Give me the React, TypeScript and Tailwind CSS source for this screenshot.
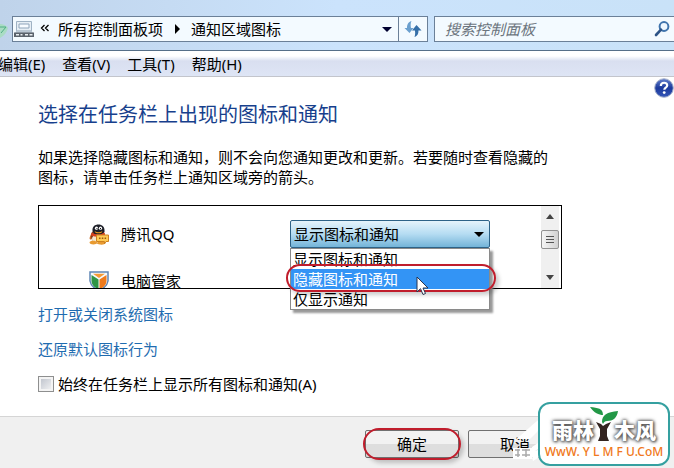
import * as React from "react";
import { useState } from "react";

const menuItems = ["编辑(E)", "查看(V)", "工具(T)", "帮助(H)"];

const behaviors = ["显示图标和通知", "隐藏图标和通知", "仅显示通知"];

const links = ["打开或关闭系统图标", "还原默认图标行为"];

function DeviceIcon() {
  return (
    <svg width="20" height="18" viewBox="0 0 20 18" aria-hidden="true">
      <path d="M2.500 1.500h15v10h-15z" fill="#e6eef5" stroke="#9fb2c4" />
      <path d="M5 4h10v4H5z" fill="#f7fbff" stroke="#8fa5bb" />
      <path d="M3 10h14l2 3H1z" fill="#b8c6d3" />
      <path d="M0 12.500h20V17H0z" fill="#5a626c" />
      <path d="M2 14h3v1.500H2zM6.500 14h2v1.500h-2zM11 14h3v1.500h-3zM15.500 14h3v1.500h-3z" fill="#e8eef2" />
    </svg>
  );
}

function RefreshIcon() {
  return (
    <svg width="18" height="18" viewBox="0 0 18 18" aria-hidden="true">
      <path d="M7.500 1C3.600 2 3 5.500 3 8H.5l5 5 4-5H7C6.500 5.500 6.500 3 7.500 1z" fill="#6a9fce" />
      <path d="M10.500 17c3.600-1.200 4-4 3.900-6.500H17.500l-5-5.500-4.500 5.500h2.900c.5 2 .3 4.500-.4 6.500z" fill="#356fa8" />
    </svg>
  );
}

function SearchIcon() {
  return (
    <svg width="16" height="16" viewBox="0 0 16 16" fill="none" aria-hidden="true">
      <circle cx="10" cy="5.500" r="4.400" fill="#eef7ff" stroke="#3f74ad" strokeWidth="2" />
      <path d="M7 8.700 2 14" stroke="#2c5387" strokeWidth="2.600" strokeLinecap="round" />
    </svg>
  );
}

function HelpIcon() {
  return (
    <svg width="20" height="20" viewBox="0 0 20 20" aria-hidden="true">
      <defs>
        <linearGradient id="help" x1="0" y1="0" x2="0" y2="1">
          <stop offset="0" stopColor="#6480cc" />
          <stop offset="0.5" stopColor="#1c3a9c" />
          <stop offset="1" stopColor="#3557b8" />
        </linearGradient>
      </defs>
      <circle cx="10" cy="10" r="9.300" fill="url(#help)" stroke="#a9b3cc" />
      <path d="M6.800 8c0-4.300 6.600-4.200 6.400-.5-.1 2.200-2.900 2.200-2.900 4.300" fill="none" stroke="#fff" strokeWidth="2.200" />
      <circle cx="10.200" cy="14.600" r="1.400" fill="#fff" />
    </svg>
  );
}

function QQIcon() {
  return (
    <svg width="20" height="21" viewBox="0 0 20 21" aria-hidden="true">
      <path d="M3 9c-3 4-3 7-1 6.500l2-3z" fill="#c9641c" />
      <ellipse cx="9" cy="12" rx="7" ry="7.500" fill="#7a3a1e" />
      <ellipse cx="8" cy="15" rx="5" ry="4.500" fill="#f6e6cc" />
      <path d="M3.500 7C3 2.500 6 .5 9.500.5S16 3 15.500 7.500l-2.500 3H6z" fill="#1d1f28" />
      <ellipse cx="7.500" cy="4.300" rx="1.600" ry="1.800" fill="#fff" />
      <ellipse cx="11.500" cy="4.300" rx="1.600" ry="1.800" fill="#fff" />
      <path d="M7.500 4h1v1.300h-1zM11 4h1v1.300h-1z" fill="#111" />
      <path d="M5.500 7q4 2.500 8 0l-1 1.800q-3 1-6 0z" fill="#f29b1d" />
      <path d="M2.500 8.500q6 4 13 0l.5 3Q9 14 2 11.500z" fill="#d9401c" />
      <path d="M.5 18.500c0-2.500 7-2.500 7.500 0s-7.500 2.500-7.500 0zM8 19c1-2.500 7-2.500 8 0s-8 2-8 0z" fill="#e89a30" />
      <path d="M7.500 11h12v6.500H17L15.500 20v-2.500h-8z" fill="#ffcb55" stroke="#cf8220" />
      <path d="M10 14.300h1.500M12.800 14.300h1.500M15.600 14.300h1.500" stroke="#9a5b10" strokeWidth="1.500" />
    </svg>
  );
}

function ShieldIcon() {
  return (
    <svg width="20" height="20" viewBox="0 0 20 20" aria-hidden="true">
      <path d="M1 1h18v9q-1 6-9 9.500Q2 16 1 10z" fill="#f4f9fd" stroke="#5f86b5" strokeWidth="1.500" />
      <path d="M2.500 4L9.500 8.500v10Q2.500 15 2.500 10z" fill="#2f9545" />
      <path d="M17.500 4L10.500 8.500v10q7-3.500 7-8.500z" fill="#ee7a1c" />
      <path d="M4 2.800h12L10 7z" fill="#f59a34" />
    </svg>
  );
}

function CancelSmudge() {
  return (
    <svg width="66" height="48" viewBox="0 0 66 48" className="pointer-events-none absolute -top-4 left-10" aria-hidden="true">
      <path d="M7 26C17 18 26 9 34 3l4 4-9 11q-4 4-7 7H7z" fill="#fff" />
      <path d="M5 34h19v11H5z" fill="#fff" />
      <path d="M24 33l9-6v6l-6 4 6-2v7l-8 5-1-4z" fill="#fff" />
      <path d="M7 36h5M14 36h8M7 41h5M14 41h8M10 35v8M18 35v8" stroke="#aaa" strokeWidth="1.500" />
    </svg>
  );
}

function SiteBadge() {
  return (
    <div className="absolute right-1 bottom-0.5 flex h-16 w-33 flex-col items-center rounded-xl border-2 border-[#35a0a0] bg-white pt-3">
      <div className="flex items-center text-[21px] leading-7 font-black text-white [text-shadow:0_0_3px_#555,0_0_4px_#666,1px_1px_3px_#555]">
        <span>雨林</span>
        <svg width="28" height="34" viewBox="0 0 28 34" className="-mx-1 -mt-3" aria-hidden="true">
          <path d="M8 34l2-5v-7L6 15l5 2 2 2 3-2 5-2-4 7v7l2 5z" fill="#33241f" />
          <path d="M12 15C12 8 17 5 28 4c-1 7-5 10-11 10-2 0-3 1-4 3z" fill="#239847" />
          <path d="M13 8C9 8 4 6 0 0c8 1 13 1 13 8z" fill="#239847" />
        </svg>
        <span>木风</span>
      </div>
      <span className="text-xs leading-4 font-medium whitespace-pre text-[#f07820]">WwW. Y L M F U.CoM</span>
    </div>
  );
}

export default function App() {
  const [behavior, setBehavior] = useState(behaviors[0]);
  const [showAll, setShowAll] = useState(false);

  return (
    <div className="relative flex min-h-screen flex-col overflow-hidden bg-white font-['Noto_Sans','Noto_Sans_CJK_SC',sans-serif] text-[15px] leading-5 text-black">
      <header className="flex items-center bg-linear-to-r from-[#bfd3ea] via-[#cbe3fc] to-[#c9e2f8] pt-4 pb-2">
        <svg width="12" height="26" viewBox="0 0 12 26" className="shrink-0" aria-hidden="true">
          <path d="M0 8q5 0 8 4-2 7-8 10z" fill="#a9dcc3" />
          <path d="M0 11h6L1 17" fill="none" stroke="#4fae85" />
        </svg>
        <div className="flex h-[26px] min-w-0 flex-1 items-center border border-[#6b8098] bg-[#f3faff]">
          <nav className="flex min-w-0 flex-1 items-center whitespace-nowrap">
            <span className="ml-px">
              <DeviceIcon />
            </span>
            <svg width="24" height="10" viewBox="0 0 24 10" fill="none" stroke="#000" strokeWidth="1.300" aria-hidden="true">
              <path d="M10.500 1l-3 3 3 3M14.500 1l-3 3 3 3" />
            </svg>
            <a href="#all">所有控制面板项</a>
            <svg width="28" height="10" viewBox="0 0 28 10" aria-hidden="true">
              <path d="M12 0l5 5-5 5z" />
            </svg>
            <a href="#icons">通知区域图标</a>
          </nav>
          <button aria-label="以前的位置" className="px-1.5">
            <svg width="10" height="5" viewBox="0 0 10 5" aria-hidden="true">
              <path d="M0 0h10L5 5z" fill="#000030" />
            </svg>
          </button>
          <button aria-label="刷新" className="flex h-full w-[29px] items-center justify-center border-l border-[#6b8098]">
            <RefreshIcon />
          </button>
        </div>
        <div className="ml-1.5 flex h-[26px] w-60 items-center border border-r-0 border-[#6b8098] bg-[#f3faff] pr-1 pl-2.5">
          <input
            type="search"
            aria-label="搜索控制面板"
            placeholder="搜索控制面板"
            className="min-w-0 flex-1 bg-transparent italic outline-none placeholder:text-[#6c757e]"
          />
          <button aria-label="搜索">
            <SearchIcon />
          </button>
        </div>
      </header>

      <nav className="-ml-0.5 flex h-[27px] items-center gap-[17px] border-t border-b border-t-[#566f88] border-b-[#c3c5cc] bg-linear-to-b from-white from-20% via-[#d9dff0] via-40% to-[#dee5f5]">
        {menuItems.map((item) => (
          <button key={item} className="whitespace-nowrap">
            {item}
          </button>
        ))}
      </nav>

      <main className="flex flex-1 items-start justify-between pl-[38px]">
        <div className="w-[524px] pt-6">
          <h1 className="text-xl leading-7 text-[#173f8c]">选择在任务栏上出现的图标和通知</h1>
          <p className="mt-[18px]">
            如果选择隐藏图标和通知，则不会向您通知更改和更新。若要随时查看隐藏的图标，请单击任务栏上通知区域旁的箭头。
          </p>

          <section className="mt-[18px] flex h-[84px] border border-black pr-0.5">
            <ul className="h-full flex-1 overflow-hidden pt-[18px] pl-[50px]">
              <li className="flex h-[47px] items-start gap-3">
                <QQIcon />
                <span id="qq">腾讯QQ</span>
              </li>
              <li className="flex h-[47px] items-start gap-3">
                <ShieldIcon />
                <span>电脑管家</span>
              </li>
            </ul>
            <div className="relative mt-3.5 w-[200px]">
              <select
                aria-labelledby="qq"
                value={behavior}
                onChange={(e) => setBehavior(e.target.value)}
                className="h-7 w-full appearance-none rounded-xs border border-[#2d6287] bg-linear-to-b from-[#e5f3fb] via-[#b5dcf2] to-[#73b4d8] px-[3px] outline-none"
              >
                {behaviors.map((b) => (
                  <option key={b}>{b}</option>
                ))}
              </select>
              <svg width="10" height="5" viewBox="0 0 10 5" className="pointer-events-none absolute top-3 right-1.5" aria-hidden="true">
                <path d="M0 0h10L5 5z" />
              </svg>
              <ul role="listbox" className="absolute top-7 left-0 z-10 w-full border border-[#8a8a8a] bg-white shadow-[3px_3px_2px_#999]">
                {behaviors.map((b, i) => (
                  <li
                    key={b}
                    role="option"
                    aria-selected={i === 1}
                    onClick={() => setBehavior(b)}
                    className={`px-0.5 ${i === 1 ? "bg-[#3394f5] text-white" : ""}`}
                  >
                    {b}
                  </li>
                ))}
              </ul>
              <div className="pointer-events-none absolute top-11 -right-1.5 -left-1 z-20 h-7 rounded-full border-2 border-[#c01d2c] shadow-[3px_3px_4px_#0003]" />
              <svg width="13" height="20" viewBox="0 0 13 20" className="absolute top-14 left-[126px] z-30" aria-hidden="true">
                <path d="M1 1v15l3.500-3.300L7 18.500l2.500-1L7 12h5z" fill="#fff" stroke="#29344e" />
              </svg>
            </div>
            <div className="ml-[51px] flex w-[18px] flex-col items-center justify-between bg-[#f0f0f0] py-2">
              <svg width="8" height="5" viewBox="0 0 8 5" aria-hidden="true">
                <path d="M0 5h8L4 0z" fill="#444" />
              </svg>
              <div className="mb-4 flex h-[19px] w-full flex-col items-center justify-center gap-0.5 rounded-xs border border-[#929292] bg-linear-to-r from-[#f5f5f5] to-[#d2d2d2]">
                <span className="h-px w-2 bg-[#555]" />
                <span className="h-px w-2 bg-[#555]" />
                <span className="h-px w-2 bg-[#555]" />
              </div>
              <svg width="8" height="5" viewBox="0 0 8 5" aria-hidden="true">
                <path d="M0 0h8L4 5z" fill="#444" />
              </svg>
            </div>
          </section>

          <div className="mt-[15px] flex flex-col items-start gap-[15px]">
            {links.map((link) => (
              <a key={link} href="#" className="text-[#1f6cb0]">
                {link}
              </a>
            ))}
            <label className="flex items-center gap-1">
              <input
                type="checkbox"
                checked={showAll}
                onChange={(e) => setShowAll(e.target.checked)}
                className="size-4 appearance-none border border-[#8e8f8f] bg-linear-to-br from-[#b9bec8] to-[#f8f8f8] shadow-[inset_0_0_0_2px_#f4f4f4] checked:bg-[#3394f5]"
              />
              始终在任务栏上显示所有图标和通知(A)
            </label>
          </div>
        </div>
        <button aria-label="帮助" className="mt-px">
          <HelpIcon />
        </button>
      </main>

      <footer className="flex h-[52px] items-start justify-end gap-[9px] border-t border-[#d5d5d5] bg-[#f0f0f0] pt-[13px] pr-28">
        <div className="relative">
          <button className="h-7 w-[94px] rounded-xs border border-[#707070] bg-linear-to-b from-[#f2f2f2] from-50% to-[#dedede] to-50%">确定</button>
          <div className="pointer-events-none absolute -inset-x-0.5 -inset-y-0.5 rounded-full border-2 border-[#c01d2c] shadow-[3px_3px_4px_#0003]" />
        </div>
        <div className="relative">
          <button className="h-7 w-[94px] rounded-xs border border-[#707070] bg-linear-to-b from-[#f2f2f2] from-50% to-[#dedede] to-50%">取消</button>
          <CancelSmudge />
        </div>
      </footer>
      <SiteBadge />
    </div>
  );
}
